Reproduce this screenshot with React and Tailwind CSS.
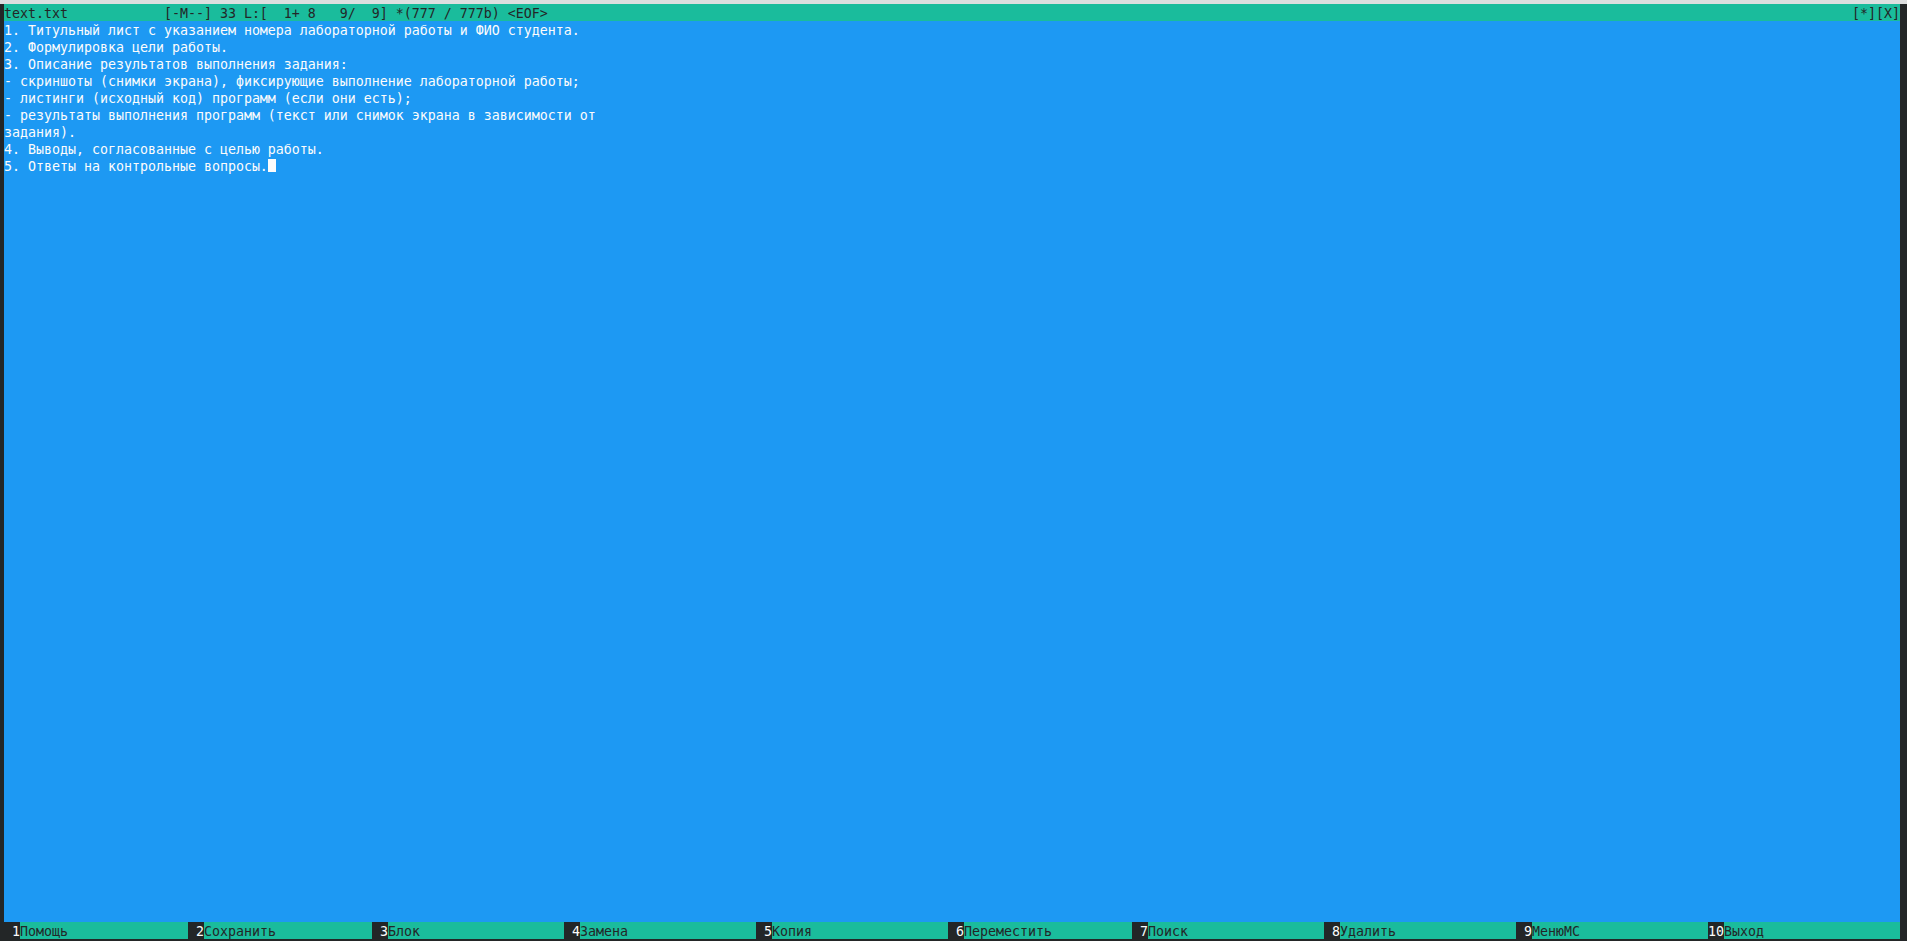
const LINES = [
  "1. Титульный лист с указанием номера лабораторной работы и ФИО студента.",
  "2. Формулировка цели работы.",
  "3. Описание результатов выполнения задания:",
  "- скриншоты (снимки экрана), фиксирующие выполнение лабораторной работы;",
  "- листинги (исходный код) программ (если они есть);",
  "- результаты выполнения программ (текст или снимок экрана в зависимости от",
  "задания).",
  "4. Выводы, согласованные с целью работы.",
  "5. Ответы на контрольные вопросы.",
];

// widths in columns, one column = 8px
const KEYS = [
  { key: " 1", label: "Помощь", cols: 23 },
  { key: " 2", label: "Сохранить", cols: 23 },
  { key: " 3", label: "Блок", cols: 24 },
  { key: " 4", label: "Замена", cols: 24 },
  { key: " 5", label: "Копия", cols: 24 },
  { key: " 6", label: "Переместить", cols: 23 },
  { key: " 7", label: "Поиск", cols: 24 },
  { key: " 8", label: "Удалить", cols: 24 },
  { key: " 9", label: "МенюMC", cols: 24 },
  { key: "10", label: "Выход", cols: 24 },
];

const mono = "font-['DejaVu_Sans_Mono',monospace] text-[13.29px] whitespace-pre";

// one terminal cell row: 17px tall, glyphs sit 1px lower than centred
const row = "h-[17px] pt-[2px] leading-[15px]";

export default function App() {
  return (
    <div className={`w-screen h-screen bg-[#232627] flex flex-col overflow-hidden ${mono}`}>
      <div className="h-[4px] bg-[#dcdedf]" />
      <div className="flex flex-1 min-h-0 pl-[4px]">
        <div className="w-[1896px] flex flex-col">
          {/* Status line */}
          <div className={`${row} bg-[#1abc9c] text-[#232627] flex justify-between`}>
            <span>{"text.txt            [-M--] 33 L:[  1+ 8   9/  9] *(777 / 777b) <EOF>"}</span>
            <span>[*][X]</span>
          </div>

          {/* Editor body */}
          <div className="flex-1 bg-[#1d99f3] text-[#fcfcfc] flex flex-col">
            {LINES.map((line, i) => (
              <div key={i} className={`${row} flex`}>
                <span>{line}</span>
                {i === LINES.length - 1 && (
                  <span className="inline-block w-[8px] h-[13px] bg-[#fcfcfc]" />
                )}
              </div>
            ))}
          </div>

          {/* Button bar */}
          <div className="h-[17px] bg-[#1abc9c] flex">
            {KEYS.map((k) => (
              <div key={k.key} className="flex" style={{ width: k.cols * 8 }}>
                <span className={`${row} bg-[#232627] text-[#fcfcfc]`}>{k.key}</span>
                <span className={`${row} text-[#232627]`}>{k.label}</span>
              </div>
            ))}
          </div>
        </div>
      </div>
      <div className="h-[2px]" />
    </div>
  );
}
